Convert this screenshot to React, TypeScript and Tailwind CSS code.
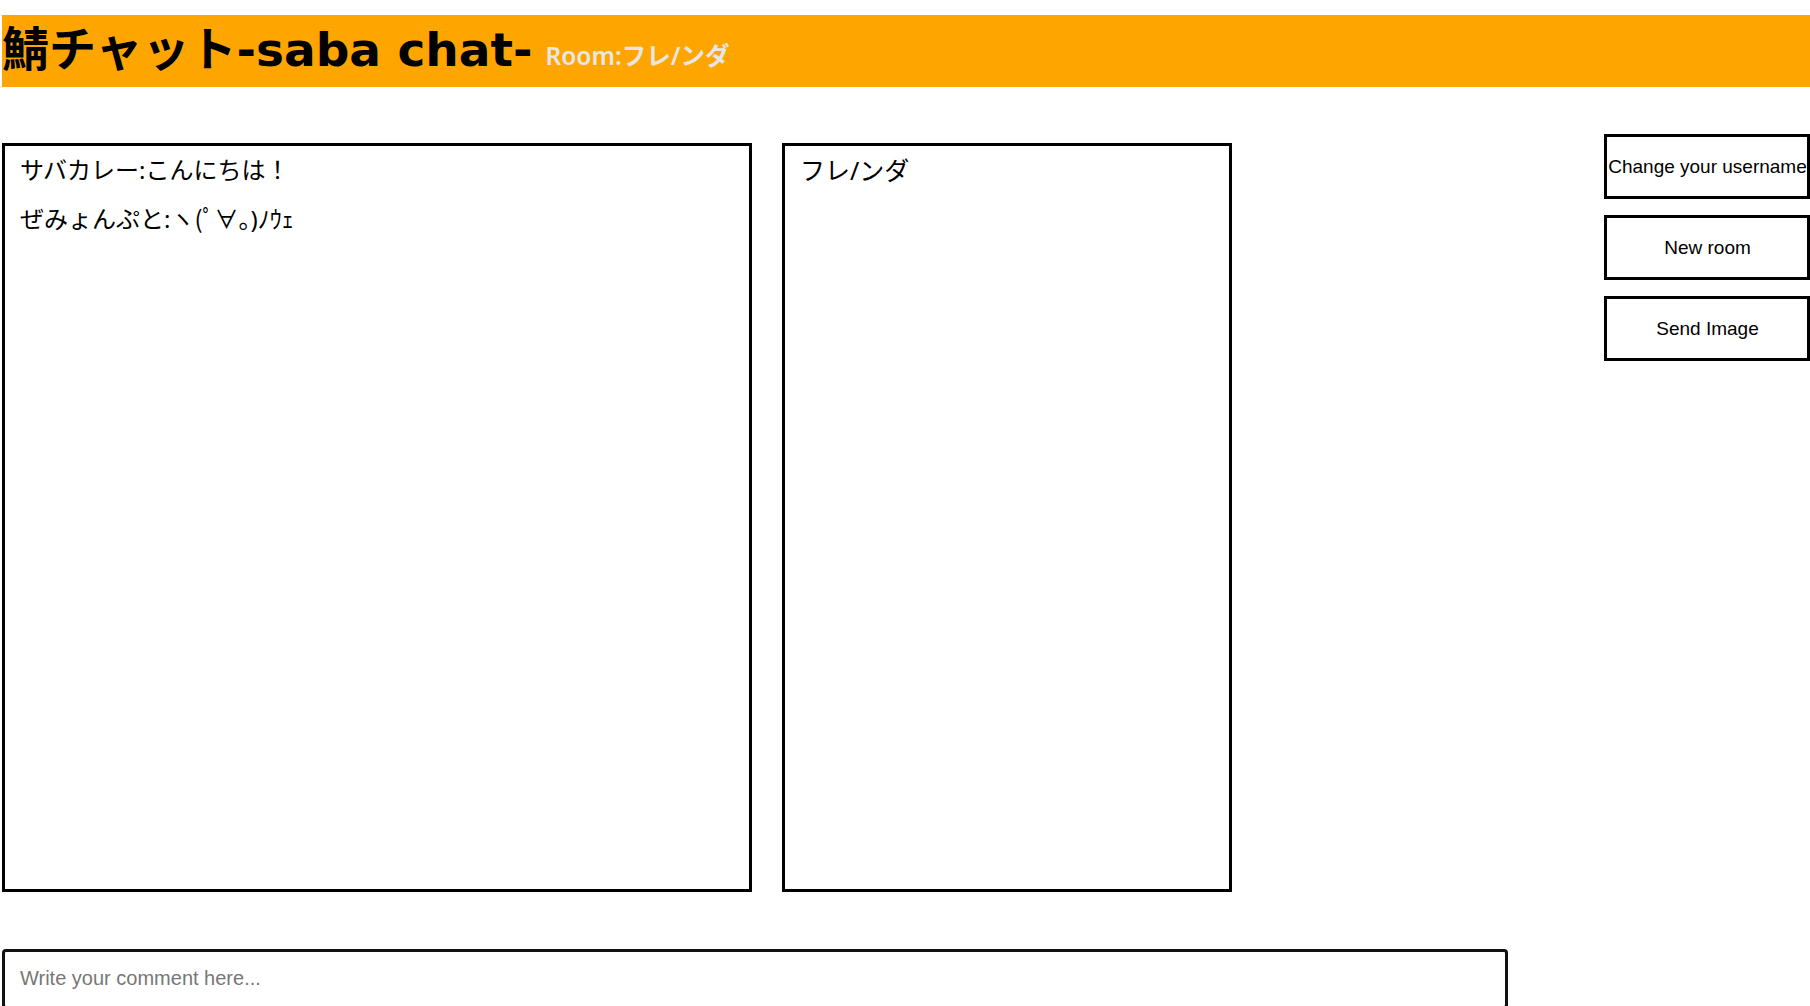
import { FC } from 'react'

const MESSAGES = [
  { user: 'サバカレー', text: 'こんにちは！' },
  { user: 'ぜみょんぷと', text: 'ヽ(ﾟ∀。)ﾉｳｪ' },
]

const USERS = ['フレ/ンダ']

const ROOM = 'フレ/ンダ'

const jp = "font-['Noto_Sans','Noto_Sans_CJK_JP',sans-serif]"

const App: FC = () => {
  return (
    <div className="chat-page w-[1810px] h-[1006px] overflow-hidden bg-white pl-[2px] pt-[15px] font-['Liberation_Sans',Arial,sans-serif] text-black">
      {/* Header */}
      <header className="chat-header h-[72px] bg-[#ffa500] flex items-center">
        <h1 className="chat-title flex items-center font-['DejaVu_Sans','Noto_Sans_CJK_JP',sans-serif] font-bold text-[47px] leading-none pb-[3px]">
          鯖チャット-saba chat-
          <span className="chat-room ml-[13px] pt-[14px] text-[24.5px] font-semibold text-[#e6e6e6] font-['Noto_Sans','Noto_Sans_CJK_JP',sans-serif]">
            Room:{ROOM}
          </span>
        </h1>
      </header>

      {/* Main */}
      <div className="chat-main flex items-start mt-[47px]">
        <section className={`chat-log mt-[9px] w-[750px] h-[749px] border-[3px] border-black px-[15px] pt-[8px] flex flex-col gap-[17px] ${jp}`}>
          {MESSAGES.map((m, i) => (
            <p key={i} className="chat-message text-[24px] leading-[32px]">
              {m.user}:{m.text}
            </p>
          ))}
        </section>

        <section className={`chat-users mt-[9px] ml-[30px] w-[450px] h-[749px] border-[3px] border-black px-[15px] pt-[8px] ${jp}`}>
          {USERS.map((u) => (
            <p key={u} className="chat-user text-[25px] leading-[32px]">
              {u}
            </p>
          ))}
        </section>

        <div className="chat-actions ml-[372px] flex flex-col gap-[16px] shrink-0">
          {['Change your username', 'New room', 'Send Image'].map((label) => (
            <button
              key={label}
              className="chat-action w-[206px] h-[65px] border-[3px] border-black bg-white text-[19px] whitespace-nowrap flex items-center justify-center pt-[2px] pl-[1px]"
            >
              {label}
            </button>
          ))}
        </div>
      </div>

      {/* Comment input */}
      <div className="chat-input-row mt-[57px]">
        <input
          type="text"
          placeholder="Write your comment here..."
          className="chat-input w-[1506px] h-[60px] border-[3px] border-[#111] rounded-[4px] px-[15px] pt-[1px] pb-[2px] text-[20px] placeholder:text-[#777] outline-none"
        />
      </div>
    </div>
  )
}

export default App
